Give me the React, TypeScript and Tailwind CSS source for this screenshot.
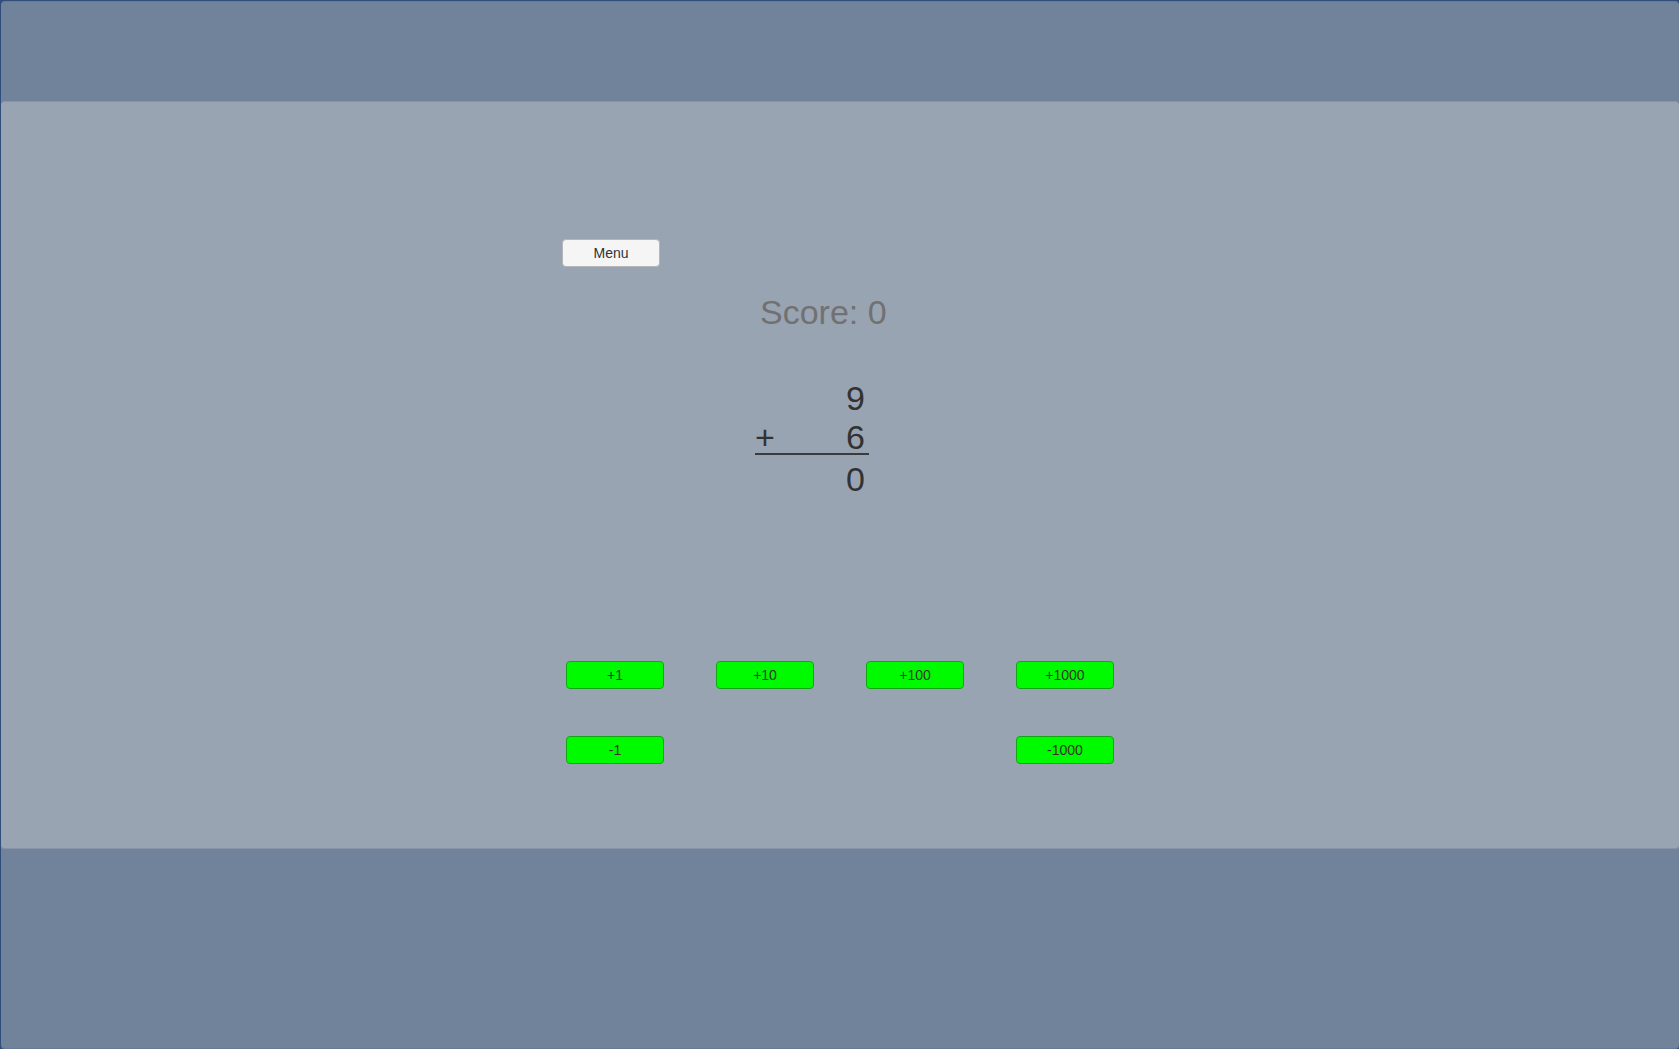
import { useState } from "react";

const FIRST = 9;
const SECOND = 6;

const steps: (number | null)[] = [1, 10, 100, 1000, -1, null, null, -1000];

export default function App() {
  const [answer, setAnswer] = useState(0);

  return (
    <div className="h-screen bg-white pb-px font-['Liberation_Sans',Arial,sans-serif] text-[#323232]">
      <div className="flex h-full flex-col border-t border-l border-[#314d79] bg-[#314d79]">
        <div className="flex min-h-0 flex-1 flex-col rounded-sm border-t border-b border-[#687a95] bg-[#71829b]">
          <main className="mt-[99px] rounded-sm border-t border-b border-[#8794a7] bg-[#99a4b3] pt-[137px] pb-[84px]">
            <div className="mx-auto w-[556px]">
              <button
                type="button"
                className="block h-7 w-[98px] rounded border border-[#b5b6b8] bg-[#f5f5f5] text-sm"
              >
                Menu
              </button>

              <p className="mt-[25px] ml-[198px] text-[34px] leading-10 text-[#717171]">
                Score: 0
              </p>

              <div className="mt-[50px] ml-[193px] w-[114px] text-right text-[34px] leading-8">
                <div className="pr-1">{FIRST}</div>
                <div className="mt-[7px] flex justify-between border-b-2 border-[#3a3b3d] pr-1">
                  <span>+</span>
                  <span>{SECOND}</span>
                </div>
                <output className="mt-2 block pr-1">{answer}</output>
              </div>

              <div className="mt-[166px] grid grid-cols-4 gap-x-[52px] gap-y-[47px] px-1">
                {steps.map((step, i) =>
                  step === null ? (
                    <span key={i} />
                  ) : (
                    <button
                      key={i}
                      type="button"
                      onClick={() => setAnswer(answer + step)}
                      className="h-7 rounded border border-[#12a712] bg-[#00fa00] text-sm"
                    >
                      {step > 0 ? `+${step}` : step}
                    </button>
                  ),
                )}
              </div>
            </div>
          </main>
        </div>
      </div>
    </div>
  );
}
